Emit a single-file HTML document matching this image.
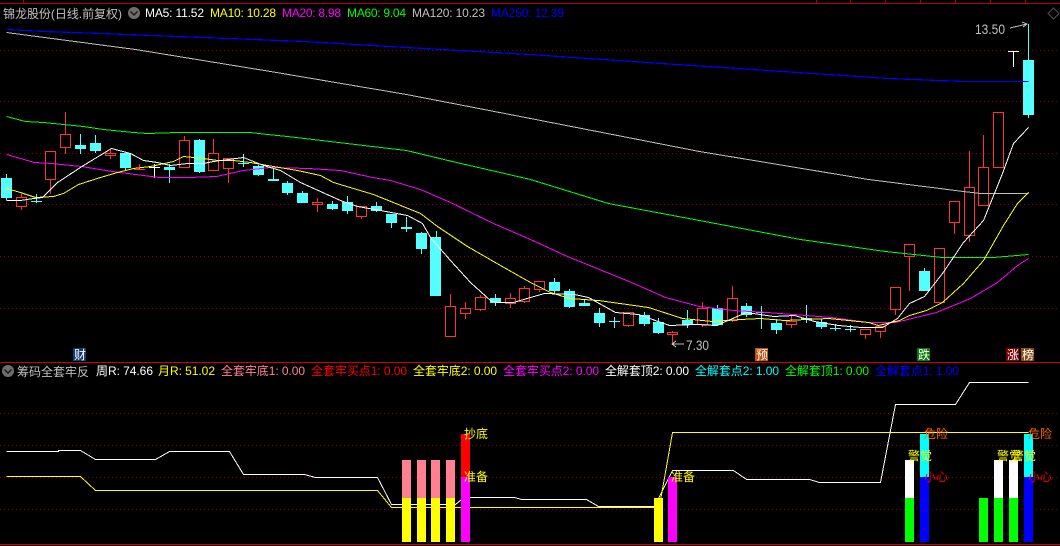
<!DOCTYPE html>
<html lang="zh"><head><meta charset="utf-8"><title>锦龙股份</title>
<style>
html,body{margin:0;padding:0;background:#000;width:1060px;height:546px;overflow:hidden}
svg{display:block}
text{font-family:"Liberation Sans","WenQuanYi Zen Hei","Noto Sans CJK SC",sans-serif;font-size:12px}
.c{shape-rendering:crispEdges}
.c *{shape-rendering:crispEdges}
</style></head><body>
<svg width="1060" height="546" viewBox="0 0 1060 546" xmlns="http://www.w3.org/2000/svg">
<defs><pattern id="d" x="0" y="0" width="4" height="1" patternUnits="userSpaceOnUse"><rect width="1" height="1" fill="#900000"/></pattern></defs>
<rect width="1060" height="546" fill="#000"/>
<g class="c">
<rect x="0" y="3" width="1060" height="1" fill="#b00000"/>
<path d="M23.5 0V3M816.5 0V3M850.5 0V3M885.5 0V3M920.5 0V3M955.5 0V3M990.5 0V3M1025.5 0V3" stroke="#b00000" fill="none"/>
<rect x="0" y="362" width="1060" height="1" fill="#d00000"/>
<rect x="0" y="544" width="1060" height="1" fill="#d00000"/>
<g fill="url(#d)">
<rect x="0" y="50" width="1060" height="1"/><rect x="0" y="101" width="1060" height="1"/><rect x="0" y="153" width="1060" height="1"/><rect x="0" y="204" width="1060" height="1"/><rect x="0" y="256" width="1060" height="1"/><rect x="0" y="308" width="1060" height="1"/><rect x="0" y="413" width="1060" height="1"/><rect x="0" y="445" width="1060" height="1"/><rect x="0" y="477" width="1060" height="1"/><rect x="0" y="509" width="1060" height="1"/>
</g>

<!-- cyan candles -->
<path fill="none" stroke="#54ffff" d="M6.5 174V200M36.5 194V203M80.5 134V154M95.5 135V153M125.5 153V171M169.5 164V183M199.5 139V173M243.5 154V167M258.5 165V176M273.5 169V181M287.5 181V195M302.5 191V203M332.5 201V210M347.5 196V214M376.5 202V212M391.5 214V228M406.5 217V232M421.5 232V254M436.5 231V296M495.5 294V306M554.5 278V294M569.5 289V308M584.5 300V306M599.5 308V327M614.5 317V328M644.5 312V326M658.5 318V334M687.5 310V328M717.5 305V326M746.5 303V317M761.5 306V329M776.5 319V334M806.5 305V323M821.5 319V329M835.5 324V331M850.5 325V332M924.5 268V291M1028.5 24V118"/>
<g fill="#54ffff">
<rect x="1" y="178" width="11" height="20"/><rect x="31" y="201" width="11" height="1"/><rect x="75" y="145" width="11" height="4"/><rect x="90" y="143" width="11" height="8"/><rect x="120" y="153" width="11" height="15"/><rect x="164" y="167" width="11" height="3"/><rect x="194" y="140" width="11" height="32"/><rect x="238" y="163" width="11" height="1"/><rect x="253" y="166" width="11" height="9"/><rect x="268" y="179" width="11" height="2"/><rect x="282" y="183" width="11" height="10"/><rect x="297" y="193" width="11" height="10"/><rect x="327" y="204" width="11" height="5"/><rect x="342" y="202" width="11" height="9"/><rect x="371" y="206" width="11" height="5"/><rect x="386" y="214" width="11" height="9"/><rect x="401" y="227" width="11" height="2"/><rect x="416" y="233" width="11" height="16"/><rect x="430" y="237" width="11" height="59"/><rect x="490" y="298" width="11" height="5"/><rect x="549" y="282" width="11" height="9"/><rect x="564" y="291" width="11" height="16"/><rect x="579" y="303" width="11" height="3"/><rect x="594" y="313" width="11" height="10"/><rect x="609" y="321" width="11" height="1"/><rect x="639" y="315" width="11" height="9"/><rect x="653" y="322" width="11" height="11"/><rect x="682" y="320" width="11" height="5"/><rect x="712" y="308" width="11" height="17"/><rect x="741" y="306" width="11" height="9"/><rect x="756" y="312" width="11" height="1"/><rect x="771" y="323" width="11" height="7"/><rect x="801" y="318" width="11" height="1"/><rect x="816" y="322" width="11" height="5"/><rect x="830" y="328" width="11" height="1"/><rect x="845" y="329" width="11" height="1"/><rect x="919" y="271" width="11" height="20"/><rect x="1023" y="60" width="11" height="55"/>
</g>
<!-- red candles -->
<path fill="none" stroke="#ff3232" d="M21.5 194V197M21.5 207V210M50.5 180V194M65.5 112V134M65.5 148V154M110.5 149V153M110.5 156V159M139.5 164V169M134 169.5H145M184.5 136V140M213.5 139V153M228.5 169V183M317.5 198V202M317.5 205V212M361.5 217V219M450.5 294V306M465.5 302V308M465.5 314V319M480.5 295V297M480.5 310V311M510.5 293V298M510.5 304V308M524.5 286V288M524.5 302V303M539.5 290V292M628.5 326V327M672.5 331V332M672.5 335V343M702.5 302V308M702.5 325V327M732.5 286V298M732.5 321V322M791.5 314V321M791.5 325V328M865.5 335V339M880.5 332V338M895.5 310V315M909.5 257V291M954.5 223V234M969.5 151V187M969.5 236V242M983.5 135V167"/>
<g fill="#000" stroke="#ff3232">
<rect x="16.5" y="197.5" width="10" height="9"/><rect x="45.5" y="151.5" width="10" height="28"/><rect x="60.5" y="134.5" width="10" height="13"/><rect x="105.5" y="153.5" width="10" height="2"/><rect x="179.5" y="140.5" width="10" height="27"/><rect x="208.5" y="153.5" width="10" height="17"/><rect x="223.5" y="158.5" width="10" height="10"/><rect x="312.5" y="202.5" width="10" height="2"/><rect x="356.5" y="206.5" width="10" height="10"/><rect x="445.5" y="306.5" width="10" height="30"/><rect x="460.5" y="308.5" width="10" height="5"/><rect x="475.5" y="297.5" width="10" height="12"/><rect x="505.5" y="298.5" width="10" height="5"/><rect x="519.5" y="288.5" width="10" height="13"/><rect x="534.5" y="281.5" width="10" height="8"/><rect x="623.5" y="312.5" width="10" height="13"/><rect x="667.5" y="332.5" width="10" height="2"/><rect x="697.5" y="308.5" width="10" height="16"/><rect x="727.5" y="298.5" width="10" height="22"/><rect x="786.5" y="321.5" width="10" height="3"/><rect x="860.5" y="329.5" width="10" height="5"/><rect x="875.5" y="326.5" width="10" height="5"/><rect x="890.5" y="287.5" width="10" height="22"/><rect x="904.5" y="244.5" width="10" height="12"/><rect x="934.5" y="248.5" width="10" height="54"/><rect x="949.5" y="201.5" width="10" height="21"/><rect x="964.5" y="187.5" width="10" height="48"/><rect x="978.5" y="167.5" width="10" height="38"/><rect x="993.5" y="112.5" width="10" height="55"/>
</g>
<!-- white dojis -->
<path fill="none" stroke="#fff" d="M154.5 164V178M149 167.5H160M1013.5 51V67M1008 51.5H1019"/>

<!-- MA lines -->
<g fill="none" stroke-width="1" transform="translate(.5 .5)">
<polyline stroke="#0000ff" stroke-width="1.2" points="6,29 44,31 101,33 203,37 304,41 406,47 530,54 631,61 767,70 888,78 963,81 1028,81"/>
<polyline stroke="#c0c0c0" points="6,32 135,49 270,71 406,94 530,118 699,151 868,179 963,191 980,193 1028,193"/>
<polyline stroke="#00ff00" points="6,116 25,121 43,122 63,124 83,126 103,129 133,132 147,133 177,132 250,132 267,134 287,136 338,142 406,150 456,162 530,179 608,203 699,220 800,239 885,251 942,257 993,257 1028,254"/>
<polyline stroke="#ff00ff" points="6,154 34,162 51,163 81,166 112,171 135,174 159,177 189,177 216,176 243,170 270,167 308,168 340,170 372,177 390,180 420,189 450,202 493,223 530,239 567,256 631,282 665,297 699,306 733,310 767,312 831,317 868,322 895,322 936,312 970,298 997,282 1017,265 1028,258"/>
<polyline stroke="#ffff00" points="6,188 20,192 35,197 53,196 63,193 78,184 100,177 117,172 133,168 150,166 173,161 183,156 203,158 217,160 233,160 250,162 267,165 297,170 320,175 333,182 373,194 420,213 437,226 467,246 500,265 530,282 550,292 569,298 598,300 648,307 682,318 712,321 740,319 760,318 784,320 828,318 868,322 878,325 899,320 909,315 926,310 942,302 963,283 983,260 1003,225 1017,203 1028,192"/>
<polyline stroke="#ffffff" points="6,200 20,200 33,198 42,197 57,182 83,165 111,148 130,153 143,160 157,162 170,165 187,163 203,163 213,161 243,157 263,165 280,170 300,182 340,200 357,206 380,210 407,215 422,223 430,237 450,260 470,282 490,300 497,302 513,302 530,297 544,293 574,294 588,297 615,312 638,314 669,325 696,324 716,325 746,312 773,316 794,315 814,321 838,325 861,327 882,327 897,318 909,303 924,296 942,273 963,242 983,220 1002,173 1013,143 1028,127"/>
</g>

<!-- arrows -->
<path fill="none" stroke="#c0c0c0" d="M1010 28L1027 24M1022 22L1027 24L1023 27M672 344H684M676 341L672 344L676 347"/>

<!-- lower panel lines -->
<g fill="none" transform="translate(.5 .5)">
<polyline stroke="#ffffff" points="6,451 58,451 58,450 80,450 95,459 155,459 169,451 229,451 243,474 304,474 315,477 377,477 391,504 455,504 461,499 465,497 514,497 521,499 586,499 598,506 654,506 672,470 733,470 746,479 809,479 819,482 880,482 895,404 955,404 969,382 1028,382"/>
<polyline stroke="#ffff00" points="6,476 80,476 95,490 377,490 391,507 654,507 660,500 672,432 1028,432"/>
</g>
<!-- lower panel bars -->
<g>
<rect x="402" y="460" width="9" height="38" fill="#ff8090"/><rect x="402" y="498" width="9" height="44" fill="#ffff00"/>
<rect x="417" y="460" width="9" height="38" fill="#ff8090"/><rect x="417" y="498" width="9" height="44" fill="#ffff00"/>
<rect x="431" y="460" width="9" height="38" fill="#ff8090"/><rect x="431" y="498" width="9" height="44" fill="#ffff00"/>
<rect x="446" y="460" width="9" height="38" fill="#ff8090"/><rect x="446" y="498" width="9" height="44" fill="#ffff00"/>
<rect x="461" y="434" width="9" height="43" fill="#ff0000"/><rect x="461" y="477" width="9" height="65" fill="#ff00ff"/>
<rect x="654" y="498" width="9" height="44" fill="#ffff00"/>
<rect x="668" y="477" width="9" height="65" fill="#ff00ff"/>
<rect x="905" y="460" width="9" height="38" fill="#ffffff"/><rect x="905" y="498" width="9" height="44" fill="#00ff00"/>
<rect x="920" y="434" width="9" height="43" fill="#00ffff"/><rect x="920" y="477" width="9" height="65" fill="#0000ff"/>
<rect x="979" y="498" width="9" height="44" fill="#00ff00"/>
<rect x="994" y="460" width="9" height="38" fill="#ffffff"/><rect x="994" y="498" width="9" height="44" fill="#00ff00"/>
<rect x="1009" y="460" width="9" height="38" fill="#ffffff"/><rect x="1009" y="498" width="9" height="44" fill="#00ff00"/>
<rect x="1024" y="434" width="9" height="43" fill="#00ffff"/><rect x="1024" y="477" width="9" height="65" fill="#0000ff"/>
</g>
<!-- badges -->
<rect x="73" y="348" width="13" height="13" fill="#0f3c6e"/>
<rect x="755" y="348" width="13" height="13" fill="#c0500f"/>
<rect x="917" y="348" width="13" height="13" fill="#0a7a0a"/>
<rect x="1006" y="348" width="13" height="13" fill="#800000"/>
<rect x="1021" y="348" width="13" height="13" fill="#8a4a10"/>
</g>

<!-- icons -->
<circle cx="134" cy="13" r="6" fill="#6e6e6e"/><path d="M130.5 11.5L134 15L137.5 11.5" fill="none" stroke="#1a1a1a" stroke-width="1.5"/>
<circle cx="8" cy="371" r="6" fill="#6e6e6e"/><path d="M4.5 369.5L8 373L11.5 369.5" fill="none" stroke="#1a1a1a" stroke-width="1.5"/>
<path d="M1053.5 8L1059 13.5L1053.5 19L1048 13.5Z" fill="none" stroke="#505050"/>

<!-- header text -->
<text x="3" y="18" fill="#c0c0c0" textLength="119">锦龙股份(日线.前复权)</text>
<text x="145" y="17" fill="#ffffff" textLength="59">MA5: 11.52</text>
<text x="210" y="17" fill="#ffff00" textLength="66">MA10: 10.28</text>
<text x="282" y="17" fill="#ff00ff" textLength="59">MA20: 8.98</text>
<text x="347" y="17" fill="#00ff00" textLength="59">MA60: 9.04</text>
<text x="412" y="17" fill="#c0c0c0" textLength="73">MA120: 10.23</text>
<text x="491" y="17" fill="#0000ff" textLength="73">MA250: 12.39</text>
<text x="975" y="34" fill="#c0c0c0" style="font-size:14px" textLength="30" lengthAdjust="spacingAndGlyphs">13.50</text>
<text x="686" y="350" fill="#c0c0c0" style="font-size:14px" textLength="23" lengthAdjust="spacingAndGlyphs">7.30</text>

<!-- badge text -->
<g fill="#fff">
<text x="74" y="359">财</text><text x="756" y="359">预</text><text x="918" y="359">跌</text><text x="1007" y="359">涨</text><text x="1022" y="359">榜</text>
</g>

<!-- sub header -->
<text x="17" y="376" fill="#c0c0c0" textLength="72">筹码全套牢反</text>
<text x="96" y="375" fill="#ffffff" textLength="57">周R: 74.66</text>
<text x="158" y="375" fill="#ffff00" textLength="57">月R: 51.02</text>
<text x="221" y="375" fill="#ff8090" textLength="84">全套牢底1: 0.00</text>
<text x="311" y="375" fill="#ff0000" textLength="96">全套牢买点1: 0.00</text>
<text x="413" y="375" fill="#ffff00" textLength="84">全套牢底2: 0.00</text>
<text x="503" y="375" fill="#ff00ff" textLength="96">全套牢买点2: 0.00</text>
<text x="605" y="375" fill="#ffffff" textLength="84">全解套顶2: 0.00</text>
<text x="695" y="375" fill="#00ffff" textLength="84">全解套点2: 1.00</text>
<text x="785" y="375" fill="#00ff00" textLength="84">全解套顶1: 0.00</text>
<text x="875" y="375" fill="#0000ff" textLength="84">全解套点1: 1.00</text>

<!-- panel labels -->
<text x="464" y="438" fill="#ffff00">抄底</text>
<text x="464" y="481" fill="#ffff00">准备</text>
<text x="671" y="481" fill="#ffff00">准备</text>
<text x="908" y="460" fill="#ffff00">警觉</text>
<text x="924" y="438" fill="#ff6400">危险</text>
<text x="924" y="481" fill="#ff0000">小心</text>
<text x="997" y="460" fill="#ffff00">警觉</text>
<text x="1012" y="460" fill="#ffff00">警觉</text>
<text x="1028" y="438" fill="#ff6400">危险</text>
<text x="1028" y="481" fill="#ff0000">小心</text>
</svg>
</body></html>
